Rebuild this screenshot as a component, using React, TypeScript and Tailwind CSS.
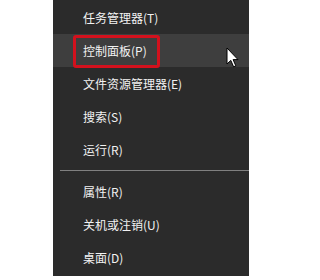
import React from "react";

const topItems = ["任务管理器(T)", "控制面板(P)", "文件资源管理器(E)", "搜索(S)", "运行(R)"];
const bottomItems = ["属性(R)", "关机或注销(U)", "桌面(D)"];

function Cursor() {
  return (
    <svg
      className="absolute left-[226px] top-[47px]"
      width="13"
      height="21"
      viewBox="0 0 13 21"
    >
      <path
        d="M1 1 L1 17 L4.8 13.4 L7.6 19.8 L9.8 18.8 L7.1 12.6 L12 12.6 Z"
        fill="#ffffff"
        stroke="#000000"
        strokeWidth="1"
        strokeLinejoin="round"
      />
    </svg>
  );
}

function Row({ label, active }: { label: string; active?: boolean }) {
  return (
    <div
      className={
        "relative flex h-[33px] items-center pl-[30px] text-[12px] text-[#f2f2f2] " +
        (active ? "bg-[#3e3e3e]" : "")
      }
    >
      {active && (
        <div className="absolute left-[20px] top-[1px] h-[33px] w-[87px] rounded-[3px] border-[3px] border-[#d3111d]" />
      )}
      <span className="leading-none">{label}</span>
    </div>
  );
}

export default function App() {
  return (
    <div
      className="relative h-[280px] w-[300px] bg-white"
      style={{ fontFamily: '"Noto Sans CJK SC", "Liberation Sans", sans-serif' }}
    >
      <div className="ml-[53px] flex h-[276px] w-[196px] flex-col bg-[#2b2b2b] pt-[1px] pb-[2px]">
        {topItems.map((item, i) => (
          <Row key={item} label={item} active={i === 1} />
        ))}

        {/* separator */}
        <div className="flex h-[9px] items-center pl-[7px]">
          <div className="h-px w-full bg-[#808080]" />
        </div>

        {bottomItems.map((item) => (
          <Row key={item} label={item} />
        ))}
      </div>

      <Cursor />
    </div>
  );
}
